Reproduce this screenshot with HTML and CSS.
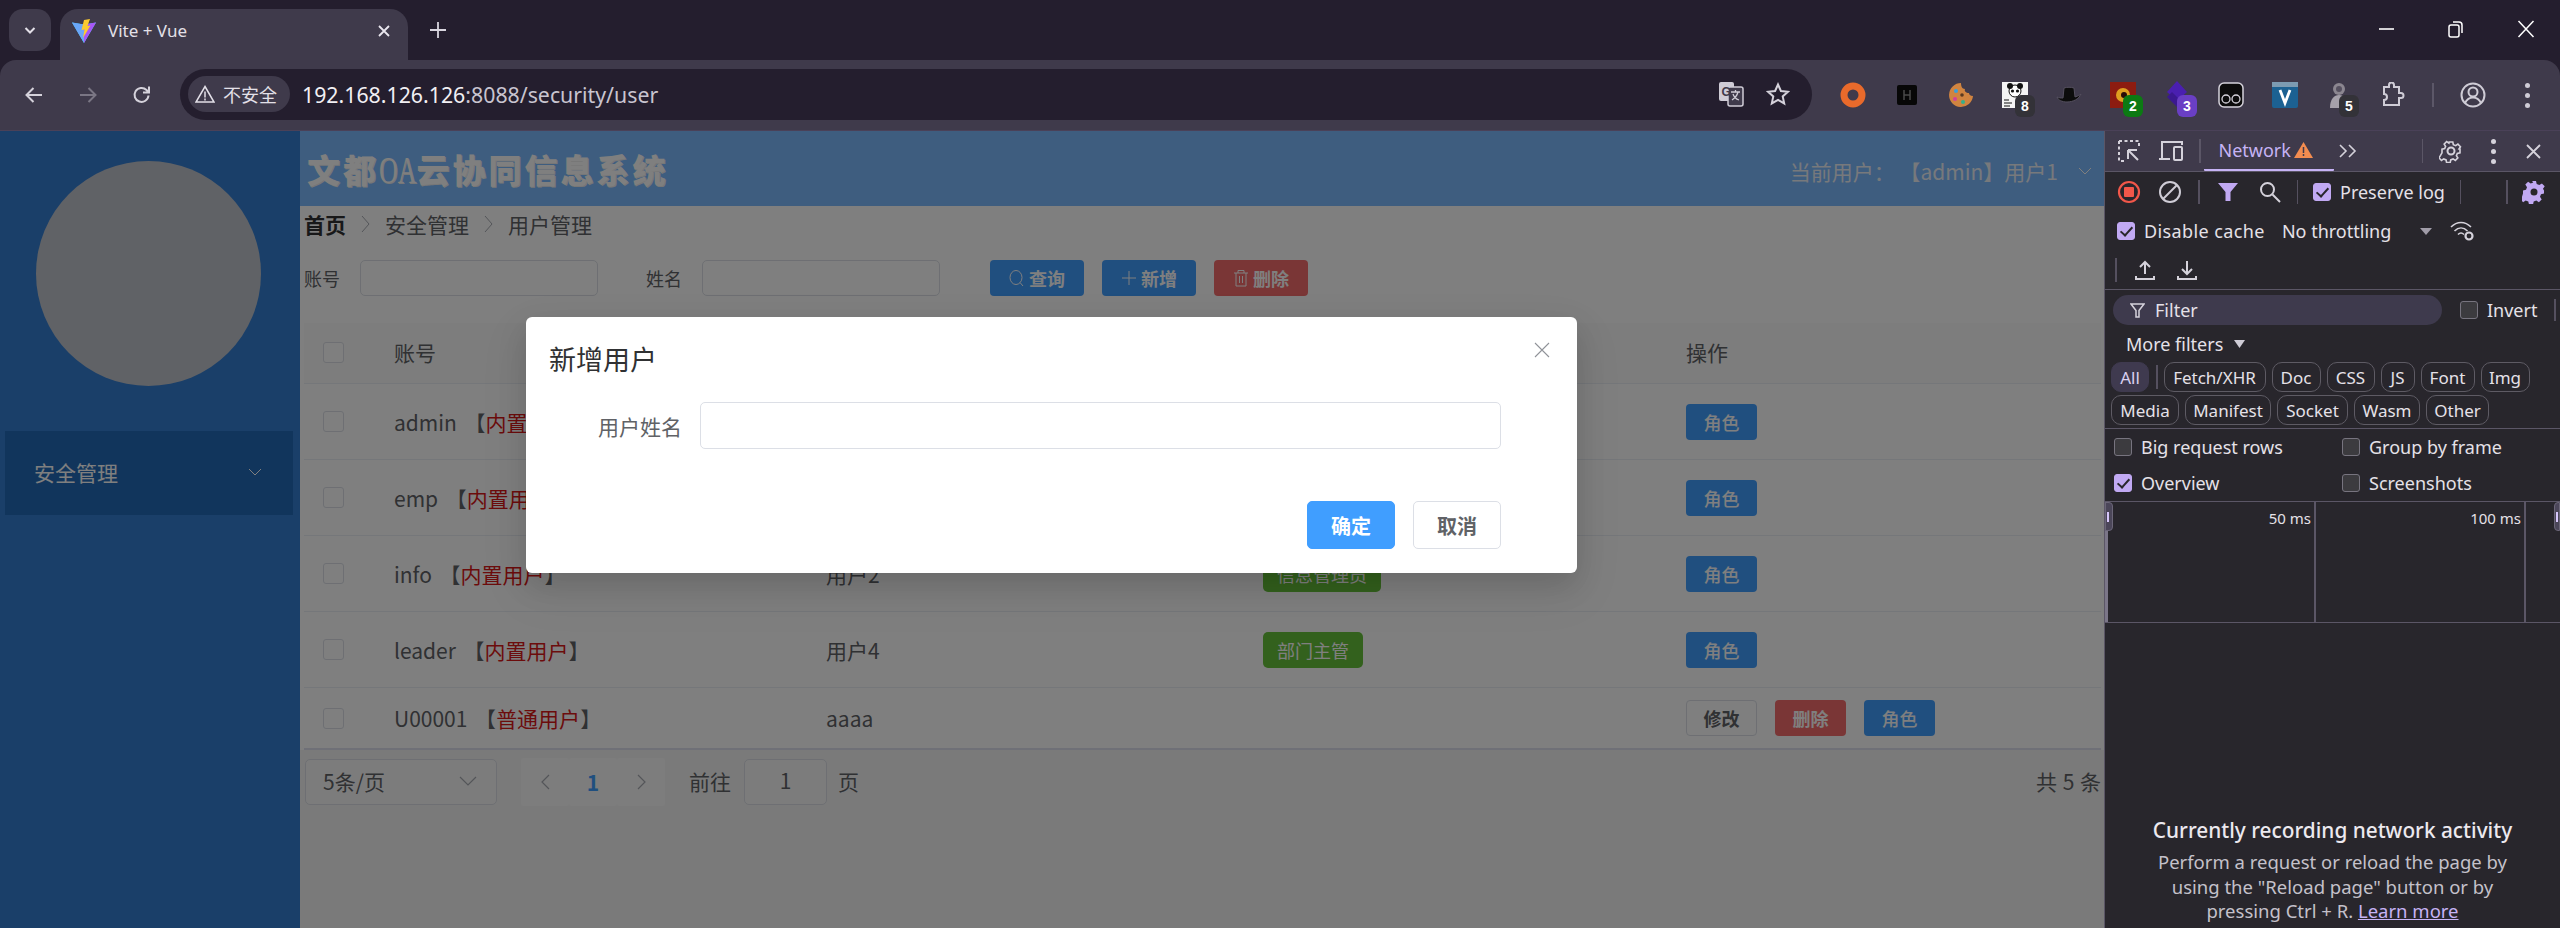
FILE: index.html
```html
<!DOCTYPE html>
<html lang="zh">
<head>
<meta charset="utf-8">
<title>Vite + Vue</title>
<link rel="stylesheet" href="styles.css">
</head>
<body>
<div class="tabstrip">
  <button class="tabsearch"><svg width="14" height="14" viewBox="0 0 14 14"><path d="M2.500 5l4.500 4.500L11.500 5" fill="none" stroke="#e3e0e8" stroke-width="2"/></svg></button>
  <div class="tab">
    <svg class="favicon" width="24" height="24" viewBox="0 0 24 24"><path d="M0 3.500L12 5.500 24 3.500 12 24z" fill="#41d1ff"/><path d="M0 3.500L12 5.500 12 24z" fill="#6aa6f8"/><path d="M24 3.500L12 5.500 12 24z" fill="#a855f7"/><path d="M12 1L18 0 15.500 7 18.500 6.500 11 19 12.500 10.500 9.500 11z" fill="#fdcb2f"/></svg>
    <span class="tabtitle">Vite + Vue</span>
    <svg class="tabclose" width="12" height="12" viewBox="0 0 12 12"><path d="M1 1l10 10M11 1L1 11" stroke="#e9e6ee" stroke-width="1.800"/></svg>
  </div>
  <svg class="newtab" width="16" height="16" viewBox="0 0 16 16"><path d="M8 0v16M0 8h16" stroke="#d9d6df" stroke-width="1.800"/></svg>
  <div class="winctl">
    <svg width="16" height="16" viewBox="0 0 16 16"><path d="M0 8h15" stroke="#fff" stroke-width="1.600"/></svg>
    <svg width="16" height="18" viewBox="0 0 16 18"><rect x="1" y="5" width="10" height="12" rx="2" fill="none" stroke="#fff" stroke-width="1.500"/><path d="M5 2h6a3 3 0 0 1 3 3v8" fill="none" stroke="#fff" stroke-width="1.500"/></svg>
    <svg width="18" height="18" viewBox="0 0 18 18"><path d="M1.500 1l15 16M16.500 1l-15 16" stroke="#fff" stroke-width="1.500"/></svg>
  </div>
</div>

<div class="toolbar">
  <div class="navbtns">
    <svg width="20" height="20" viewBox="0 0 20 20"><path d="M18 10H3M9.500 3L2.500 10l7 7" fill="none" stroke="#d5d2db" stroke-width="2"/></svg>
    <svg width="20" height="20" viewBox="0 0 20 20"><path d="M2 10h15M10.500 3l7 7-7 7" fill="none" stroke="#7a7684" stroke-width="2"/></svg>
    <svg width="20" height="20" viewBox="0 0 20 20"><path d="M16.500 10.500a7 7 0 1 1-2-5.500l2.500 2.500M17 1.500V7.500h-6" fill="none" stroke="#d5d2db" stroke-width="2"/></svg>
  </div>
  <div class="addressbar">
    <div class="chip">
      <svg width="20" height="18" viewBox="0 0 20 18"><path d="M10 1.500L19 17H1z" fill="none" stroke="#e3e0e8" stroke-width="1.500"/><path d="M10 6.500v6M10 13.500v2" stroke="#e3e0e8" stroke-width="1.500"/></svg>
      <span>不安全</span>
    </div>
    <div class="url"><span class="host">192.168.126.126</span><span class="path">:8088/security/user</span></div>
    <svg class="translate" width="26" height="26" viewBox="0 0 26 26"><rect x="1" y="1" width="15" height="19" rx="2" fill="#cfccd6"/><rect x="10" y="6" width="15" height="19" rx="2" fill="#3f3a4b" stroke="#cfccd6" stroke-width="1.500"/><text x="3.500" y="15" class="gt">G</text><path d="M13 11h9M17.500 9v2M20 11c-1 4-3 6-6 8M15 13c1 3 3 5 6 6" fill="none" stroke="#cfccd6" stroke-width="1.300"/></svg>
    <svg class="star" width="24" height="24" viewBox="0 0 24 24"><path d="M12 2.500l2.900 6.500 7.100.7-5.300 4.700 1.500 7L12 17.800l-6.200 3.600 1.500-7L2 9.700l7.100-.7z" fill="none" stroke="#d5d2db" stroke-width="2"/></svg>
  </div>
  <div class="exts">
    <div class="ext"><svg width="26" height="26" viewBox="0 0 26 26"><circle cx="13" cy="13" r="9" fill="none" stroke="#e96a2b" stroke-width="7"/></svg></div>
    <div class="ext"><svg width="20" height="20" viewBox="0 0 20 20"><rect width="20" height="20" rx="2" fill="#070707"/><path d="M7 5v10M13 5v10M7 10h6" stroke="#4a4a4a" stroke-width="1.500"/></svg></div>
    <div class="ext"><svg width="26" height="26" viewBox="0 0 26 26"><path d="M13 1a12 12 0 1 0 12 13c-3 0-4-2-4-3-3 0-5-2-4-4-3 0-4-3-4-6z" fill="#d08440"/><circle cx="8" cy="9" r="2" fill="#3aa0d8"/><circle cx="7" cy="17" r="2" fill="#d0409a"/><circle cx="14" cy="13" r="1.800" fill="#5a3a20"/><circle cx="15" cy="20" r="2" fill="#35b08a"/></svg></div>
    <div class="ext"><svg width="26" height="26" viewBox="0 0 26 26"><rect width="26" height="26" fill="#f4f4f4"/><circle cx="13" cy="9" r="6" fill="#fff" stroke="#111" stroke-width="1"/><circle cx="8" cy="4" r="3" fill="#111"/><circle cx="18" cy="4" r="3" fill="#111"/><circle cx="10.500" cy="9" r="1.600" fill="#111"/><circle cx="15.500" cy="9" r="1.600" fill="#111"/><path d="M2 18h5M2 21h8M2 24h6" stroke="#111"/></svg><span class="badge dark">8</span></div>
    <div class="ext"><svg width="26" height="18" viewBox="0 0 26 18"><path d="M8 2c3-1 7-1 10 0l1 9c3-1 5-2 6-3-2 5-8 8-14 8-5 0-9-2-10-5 2 1 4 1 6 1z" fill="#0c0c0c" stroke="#55505f" stroke-width="1"/></svg></div>
    <div class="ext"><svg width="26" height="26" viewBox="0 0 26 26"><rect width="26" height="26" fill="#8c1c10"/><circle cx="13" cy="13" r="7" fill="#e0a020"/><circle cx="14" cy="13" r="3" fill="#2a0c08"/></svg><span class="badge green">2</span></div>
    <div class="ext"><svg width="26" height="30" viewBox="0 0 26 30"><path d="M13 1l10 11-10 9L3 12z" fill="#4a1fb0"/><path d="M3 17l10 10 5-5-10-10z" fill="#3b1890"/></svg><span class="badge purple">3</span></div>
    <div class="ext"><svg width="26" height="26" viewBox="0 0 26 26"><rect x="1" y="1" width="24" height="24" rx="5" fill="#0c0c0c" stroke="#d5d2db" stroke-width="1.500"/><circle cx="8" cy="17" r="4" fill="none" stroke="#d5d2db" stroke-width="1.300"/><circle cx="18" cy="17" r="4" fill="none" stroke="#d5d2db" stroke-width="1.300"/></svg></div>
    <div class="ext"><svg width="26" height="26" viewBox="0 0 26 26"><rect width="26" height="26" rx="2" fill="#1c6192"/><rect y="0" width="26" height="5" fill="#7c9bb2"/><path d="M8 8l5 13 5-13" fill="none" stroke="#fff" stroke-width="2.800"/></svg></div>
    <div class="ext"><svg width="20" height="26" viewBox="0 0 20 26"><circle cx="10" cy="7" r="6" fill="#8b8690"/><path d="M1 26c0-9 4-13 9-13s9 4 9 13z" fill="#a5a0aa"/><circle cx="10" cy="7" r="3" fill="#55505f"/></svg><span class="badge dark">5</span></div>
    <div class="ext"><svg width="26" height="26" viewBox="0 0 26 26"><path d="M4 5h5V3a2.500 2.500 0 0 1 5 0v2h5v6h2a2.500 2.500 0 0 1 0 5h-2v7H4v-5a3 3 0 0 0 0-6z" fill="none" stroke="#cfccd6" stroke-width="2"/></svg></div>
    <span class="tbdivider"></span>
    <div class="ext"><svg width="26" height="26" viewBox="0 0 26 26"><circle cx="13" cy="13" r="11.500" fill="none" stroke="#cfccd6" stroke-width="2"/><circle cx="13" cy="10" r="4.500" fill="none" stroke="#cfccd6" stroke-width="2"/><path d="M5 21c2-4 5-5.500 8-5.500s6 1.500 8 5.500" fill="none" stroke="#cfccd6" stroke-width="2"/></svg></div>
    <div class="ext kebab"><i></i><i></i><i></i></div>
  </div>
</div>

<div class="main">
  <div class="app">
    <aside class="sidebar">
      <div class="avatar"></div>
      <div class="menuitem"><span>安全管理</span>
        <svg width="14" height="8" viewBox="0 0 14 8"><path d="M1 1l6 6 6-6" fill="none" stroke="#fff" stroke-width="1"/></svg>
      </div>
    </aside>
    <section class="content">
      <header class="apphead">
        <h1 class="brand">文都<span class="oa">OA</span>云协同信息系统</h1>
        <div class="user"><span class="username">当前用户： 【admin】用户1</span><svg width="14" height="8" viewBox="0 0 14 8"><path d="M1 1l6 6 6-6" fill="none" stroke="#fff" stroke-width="1"/></svg></div>
      </header>
      <nav class="crumbs">
        <b>首页</b><svg class="sep" width="9" height="18" viewBox="0 0 9 18"><path d="M1 1l7 8-7 8" fill="none" stroke="#a8abb2" stroke-width="1"/></svg><span>安全管理</span><svg class="sep" width="9" height="18" viewBox="0 0 9 18"><path d="M1 1l7 8-7 8" fill="none" stroke="#a8abb2" stroke-width="1"/></svg><span>用户管理</span>
      </nav>
      <div class="searchform">
        <label class="flabel">账号</label><div class="finput"></div>
        <label class="flabel second">姓名</label><div class="finput"></div>
        <div class="formbtns">
          <button class="btn primary big"><svg width="16" height="18" viewBox="0 0 16 18"><ellipse cx="7" cy="8.500" rx="6" ry="7" fill="none" stroke="#fff" stroke-width="1"/><path d="M11 13.500l3 3.500" stroke="#fff" stroke-width="1"/></svg>查询</button>
          <button class="btn primary big"><svg width="16" height="16" viewBox="0 0 16 16"><path d="M8 1v14M1 8h14" stroke="#fff" stroke-width="1"/></svg>新增</button>
          <button class="btn danger big"><svg width="16" height="18" viewBox="0 0 16 18"><path d="M1 4h14M5 4V1.500h6V4M3 4v13h10V4M6.500 7v7M9.500 7v7" fill="none" stroke="#fff" stroke-width="1"/></svg>删除</button>
        </div>
      </div>
      <div class="usertable">
        <div class="trow thead"><div class="cell"><i class="check"></i></div><div class="cell">账号</div><div class="cell">姓名</div><div class="cell">角色</div><div class="cell">操作</div></div>
        <div class="trow"><div class="cell"><i class="check"></i></div><div class="cell who">admin 【<em>内置用户</em>】</div><div class="cell">用户1</div><div class="cell"><span class="tag">系统管理员</span></div><div class="cell"><button class="btn primary">角色</button></div></div>
        <div class="trow"><div class="cell"><i class="check"></i></div><div class="cell who">emp 【<em>内置用户</em>】</div><div class="cell">用户3</div><div class="cell"><span class="tag">普通员工</span></div><div class="cell"><button class="btn primary">角色</button></div></div>
        <div class="trow"><div class="cell"><i class="check"></i></div><div class="cell who">info 【<em>内置用户</em>】</div><div class="cell">用户2</div><div class="cell"><span class="tag">信息管理员</span></div><div class="cell"><button class="btn primary">角色</button></div></div>
        <div class="trow"><div class="cell"><i class="check"></i></div><div class="cell who">leader 【<em>内置用户</em>】</div><div class="cell">用户4</div><div class="cell"><span class="tag">部门主管</span></div><div class="cell"><button class="btn primary">角色</button></div></div>
        <div class="trow last"><div class="cell"><i class="check"></i></div><div class="cell who">U00001 【<em>普通用户</em>】</div><div class="cell">aaaa</div><div class="cell"></div><div class="cell"><button class="btn plain">修改</button><button class="btn danger">删除</button><button class="btn primary">角色</button></div></div>
      </div>
      <div class="pager">
        <div class="pagesize"><span>5条/页</span><svg width="18" height="10" viewBox="0 0 18 10"><path d="M1 1l8 8 8-8" fill="none" stroke="#a8abb2" stroke-width="1.200"/></svg></div>
        <div class="pagebtns">
          <div class="pb"><svg width="9" height="16" viewBox="0 0 9 16"><path d="M8 1L1 8l7 7" fill="none" stroke="#a8abb2" stroke-width="1.200"/></svg></div>
          <div class="pb cur">1</div>
          <div class="pb"><svg width="9" height="16" viewBox="0 0 9 16"><path d="M1 1l7 7-7 7" fill="none" stroke="#a8abb2" stroke-width="1.200"/></svg></div>
        </div>
        <span class="goto">前往</span><div class="pageinput">1</div><span class="goto">页</span>
        <span class="total">共 5 条</span>
      </div>
    </section>
    <div class="overlay"></div>
    <div class="modal">
      <div class="modalhead"><span>新增用户</span><svg width="16" height="16" viewBox="0 0 16 16"><path d="M1 1l14 14M15 1L1 15" stroke="#909399" stroke-width="1.100"/></svg></div>
      <div class="modalbody"><label>用户姓名</label><div class="minput"></div></div>
      <div class="modalfoot"><button class="mbtn ok">确定</button><button class="mbtn">取消</button></div>
    </div>
  </div>

  <aside class="devtools">
    <div class="dttabs">
      <svg class="ml13" width="24" height="24" viewBox="0 0 24 24"><path d="M2 2h20v7M2 2v20h7" fill="none" stroke="#d5d2db" stroke-width="2" stroke-dasharray="3 2.500"/><path d="M11 11h9M11 11v9M11 11l10 10" fill="none" stroke="#d5d2db" stroke-width="2"/></svg>
      <svg class="ml17" width="26" height="22" viewBox="0 0 26 22"><path d="M1 19h11M4 18V2h20v3" fill="none" stroke="#d5d2db" stroke-width="2"/><rect x="16" y="7" width="8" height="13" rx="1" fill="none" stroke="#d5d2db" stroke-width="2"/></svg>
      <i class="dv dv1"></i>
      <div class="nettab"><span>Network</span><svg width="19" height="16" viewBox="0 0 19 16"><path d="M9.500 0L19 16H0z" fill="#f38c50"/><path d="M9.500 5v6M9.500 12v2" stroke="#3f3a4b" stroke-width="1.500"/></svg></div>
      <svg class="more" width="18" height="14" viewBox="0 0 18 14"><path d="M1 1l6 6-6 6M10 1l6 6-6 6" fill="none" stroke="#d5d2db" stroke-width="1.600"/></svg>
      <i class="dv dv2"></i>
      <svg class="gear" width="24" height="24" viewBox="0 0 24 24"><circle cx="12" cy="12" r="3.500" fill="none" stroke="#d5d2db" stroke-width="2"/><path d="M10 2h4l.6 3 2.600 1.100 2.500-1.700 2.800 2.900-1.600 2.500L22 10v4l-3 .6-1 2.500 1.600 2.500-2.800 2.900-2.500-1.700-2.600 1.100-.6 3h-4l-.6-3-2.600-1.100-2.500 1.700-2.800-2.900 1.600-2.500L2 14v-4l3-.6 1-2.500-1.600-2.500 2.800-2.900 2.500 1.700z" fill="none" stroke="#d5d2db" stroke-width="1.800" transform="translate(1.200 1.200) scale(.9)"/></svg>
      <div class="kebab dtk"><i></i><i></i><i></i></div>
      <svg class="dtclose" width="15" height="15" viewBox="0 0 15 15"><path d="M1 1l13 13M14 1L1 14" stroke="#d5d2db" stroke-width="1.800"/></svg>
    </div>
    <div class="dtrow r1">
      <svg class="ml13" width="24" height="24" viewBox="0 0 24 24"><circle cx="12" cy="12" r="10" fill="none" stroke="#f2574a" stroke-width="2.200"/><rect x="7" y="7" width="10" height="10" rx="1" fill="#f2574a"/></svg>
      <svg class="ml17" width="24" height="24" viewBox="0 0 24 24"><circle cx="12" cy="12" r="10" fill="none" stroke="#cfccd6" stroke-width="2"/><path d="M5 19L19 5" stroke="#cfccd6" stroke-width="2"/></svg>
      <i class="dvs a"></i>
      <svg class="funnel" width="20" height="20" viewBox="0 0 20 20"><path d="M0 1h20l-7.500 9v9h-5v-9z" fill="#c1a9f3"/></svg>
      <svg class="lens" width="22" height="22" viewBox="0 0 22 22"><circle cx="8.500" cy="8.500" r="6.500" fill="none" stroke="#d5d2db" stroke-width="2"/><path d="M13.500 13.500l7.500 7.500" stroke="#d5d2db" stroke-width="2"/></svg>
      <i class="dvs b"></i>
      <label class="cb on c1"></label><span class="lbl">Preserve log</span>
      <i class="dvs c"></i><i class="dvs d"></i>
      <svg class="pgear" width="24" height="24" viewBox="0 0 24 24"><path d="M10 1h4l.7 3 2.600 1.100 2.600-1.700 2.800 2.800-1.700 2.600L22 10.500v3l-3 .7-1 2.600 1.700 2.600-2.800 2.800-2.600-1.700-2.600 1.100-.7 3h-4l-.7-3-2.600-1.100-2.600 1.700-2.800-2.800 1.700-2.600L1 13.500v-3l3-.7 1-2.600-1.700-2.600 2.800-2.800 2.600 1.700 2.600-1.100z" fill="#c1a9f3"/><circle cx="12" cy="12" r="3.500" fill="#28262c"/></svg>
    </div>
    <div class="dtrow r2">
      <label class="cb on c2"></label><span class="lbl wide">Disable cache</span><span class="lbl thr">No throttling</span>
      <svg class="caret" width="12" height="7" viewBox="0 0 12 7"><path d="M0 0h12L6 7z" fill="#a09ca8"/></svg>
      <svg class="wifi" width="25" height="22" viewBox="0 0 25 22"><path d="M1 7c6-6 14-6 20 0M4.500 11c4-4 9-4 13 0M8 14.500c2-2 4-2 6 0" fill="none" stroke="#d5d2db" stroke-width="1.600"/><circle cx="19" cy="16" r="3.500" fill="none" stroke="#d5d2db" stroke-width="2.200"/></svg>
    </div>
    <div class="dtrow r3">
      <i class="dvs e"></i>
      <svg width="20" height="20" viewBox="0 0 20 20"><path d="M10 14V2M5 7l5-5 5 5M1 16v3h18v-3" fill="none" stroke="#d5d2db" stroke-width="2"/></svg>
      <svg class="ml23" width="20" height="20" viewBox="0 0 20 20"><path d="M10 1v13M5 9l5 5 5-5M1 16v3h18v-3" fill="none" stroke="#d5d2db" stroke-width="2"/></svg>
    </div>
    <div class="filterrow">
      <div class="pill"><svg width="15" height="15" viewBox="0 0 15 15"><path d="M1 1h13L9 7.500V14H6V7.500z" fill="none" stroke="#d5d2db" stroke-width="1.500"/></svg><span>Filter</span></div>
      <label class="cb"></label><span class="lbl">Invert</span><i class="dvs f"></i>
    </div>
    <div class="morefilters"><span class="lbl">More filters</span><svg width="11" height="8" viewBox="0 0 11 8"><path d="M0 0h11L5.500 8z" fill="#cfccd6"/></svg></div>
    <div class="chips">
      <span class="fchip sel w38">All</span><i class="dvs g"></i><span class="fchip w102">Fetch/XHR</span><span class="fchip w49">Doc</span><span class="fchip w48">CSS</span><span class="fchip w34">JS</span><span class="fchip w54">Font</span><span class="fchip w49">Img</span>
    </div>
    <div class="chips second">
      <span class="fchip w68">Media</span><span class="fchip w86">Manifest</span><span class="fchip w71">Socket</span><span class="fchip w66">Wasm</span><span class="fchip w63">Other</span>
    </div>
    <div class="options">
      <div class="opt"><label class="cb"></label><span class="lbl">Big request rows</span></div>
      <div class="opt"><label class="cb"></label><span class="lbl">Group by frame</span></div>
      <div class="opt"><label class="cb on"></label><span class="lbl">Overview</span></div>
      <div class="opt"><label class="cb"></label><span class="lbl">Screenshots</span></div>
    </div>
    <div class="overview">
      <div class="ovcell"><span>50 ms</span></div>
      <div class="ovcell"><span>100 ms</span></div>
      <i class="hd left"></i><i class="hd right"></i>
    </div>
    <div class="recording">
      <h2>Currently recording network activity</h2>
      <p>Perform a request or reload the page by using the "Reload page" button or by pressing Ctrl + R. <a>Learn more</a></p>
    </div>
  </aside>
</div>
</body>
</html>
```

FILE: styles.css
```css
* { box-sizing: border-box; }
html, body { margin: 0; height: 928px; overflow: hidden; }
body { width: 2560px; background: #241e2e; font-family: "Noto Sans", "Noto Sans CJK SC", sans-serif; color: #e5e1e8; }
button { font: inherit; border: 0; padding: 0; }
i, em { font-style: normal; }

.tabstrip { height: 60px; display: flex; align-items: flex-start; padding-left: 9px; position: relative; }
.tabsearch { width: 42px; height: 42px; margin-top: 9px; border-radius: 14px; background: #3f3a4b; display: flex; align-items: center; justify-content: center; }
.tab { width: 348px; height: 51px; margin: 9px 0 0 9px; background: #3f3a4b; border-radius: 18px 18px 0 0; display: flex; align-items: center; padding: 0 18px 8px 12px; }
.favicon { flex: none; }
.tabtitle { font-size: 17px; margin-left: 12px; flex: 1; color: #e3e0e8; }
.newtab { margin: 22px 0 0 22px; }
.winctl { margin-left: auto; display: flex; align-items: center; gap: 53px; height: 58px; padding-right: 25px; }

.toolbar { height: 70px; background: #3f3a4b; border-radius: 16px 16px 0 0; display: flex; align-items: center; padding-left: 24px; }
.navbtns { display: flex; gap: 34px; width: 156px; }
.addressbar { width: 1632px; height: 51px; background: #241e2e; border-radius: 26px; display: flex; align-items: center; padding: 0 22px 0 8px; margin-bottom: 2px; }
.chip { width: 102px; height: 36px; background: #3f3a4b; border-radius: 18px; display: flex; align-items: center; gap: 8px; padding-left: 7px; font-size: 18px; color: #e3e0e8; white-space: nowrap; }
.chip span { font-family: "Noto Sans CJK SC", sans-serif; }
.url { margin-left: 12px; font-size: 21.300px; flex: 1; white-space: nowrap; }
.host { color: #f2f0f4; }
.path { color: #c9c5d0; }
.gt { font: bold 12px "Liberation Sans", sans-serif; fill: #3f3a4b; }
.star { margin-left: 22px; }
.exts { display: flex; align-items: center; margin-left: 14px; }
.ext { width: 54px; height: 40px; display: flex; align-items: center; justify-content: center; position: relative; }
.badge { position: absolute; left: 27px; top: 20px; width: 20px; height: 22px; border-radius: 6px; font-size: 14px; font-weight: 700; line-height: 22px; text-align: center; color: #fff; font-family: "Liberation Sans", sans-serif; }
.badge.dark { background: #333238; }
.badge.green { background: #0c7a13; }
.badge.purple { background: #6a3fc4; }
.tbdivider { width: 2px; height: 24px; background: #5c5768; margin: 0 12px 0 12px; }
.kebab { display: flex; flex-direction: column; align-items: center; justify-content: center; gap: 5px; }
.kebab i { width: 5px; height: 5px; border-radius: 50%; background: #cfccd6; }

.main { height: 798px; display: flex; border-top: 1px solid #4a4158; background: #3f3a4b; }
.app { width: 2104px; height: 797px; display: flex; position: relative; overflow: hidden; flex: none; }
.sidebar { width: 300px; flex: none; background: #347ed2; padding-top: 30px; }
.avatar { width: 225px; height: 225px; border-radius: 50%; background: #c0c4cc; margin-left: 36px; }
.menuitem { margin: 45px 7px 0 5px; height: 84px; background: #226ab8; display: flex; align-items: center; justify-content: space-between; padding: 0 31px 2px 29px; font-size: 21px; color: #fff; font-family: "Noto Sans CJK SC", sans-serif; }
.content { flex: 1; background: #fff; display: flex; flex-direction: column; color: #606266; font-family: "Noto Sans CJK SC", sans-serif; font-size: 21px; }
.apphead { height: 75px; background: #7cbaff; display: flex; align-items: center; justify-content: space-between; padding: 0 12px 0 7px; flex: none; }
.brand { margin: 2px 0 0; font-size: 33px; line-height: 1; letter-spacing: 3px; font-weight: 900; color: #fff; text-shadow: 1px 1px 0 #eee; white-space: nowrap; }
.oa { font-family: "Liberation Serif", serif; font-size: 37px; line-height: 33px; font-weight: 400; letter-spacing: 0; display: inline-block; transform: scaleX(.7); transform-origin: left; margin-right: -16px; }
.user { display: flex; align-items: center; gap: 20px; color: #eef2f8; margin-top: 4px; }
.username { white-space: pre; }
.crumbs { height: 36px; flex: none; display: flex; align-items: center; padding-left: 4px; color: #606266; white-space: nowrap; }
.crumbs b { color: #303133; font-weight: 700; }
.sep { margin: 0 15px; }
.searchform { flex: none; height: 36px; margin-top: 18px; display: flex; align-items: center; padding-left: 4px; font-size: 18px; }
.flabel { width: 56px; flex: none; }
.flabel.second { margin-left: 48px; }
.finput { width: 238px; height: 36px; border: 1.500px solid #dcdfe6; border-radius: 5px; background: #fff; }
.formbtns { display: flex; gap: 18px; margin-left: 50px; }
.btn { height: 36px; width: 71px; border-radius: 4px; font-size: 18px; color: #fff; font-weight: 700; font-family: "Noto Sans CJK SC", sans-serif; display: inline-flex; align-items: center; justify-content: center; gap: 4px; }
.btn.big { width: 94px; }
.primary { background: #409eff; }
.btn.primary:not(.big) { font-weight: 500; }
.danger { background: #f56c6c; }
.plain { background: #fff; border: 1px solid #dcdfe6; color: #606266; }

.usertable { margin: 27px 3px 0 4px; flex: none; background: #fff; }
.trow { height: 76px; display: grid; grid-template-columns: 90px 432px 437px 423px 1fr; align-items: center; border-bottom: 1px solid #ebeef5; }
.trow.thead { height: 61px; background: #fafafa; padding-bottom: 2px; }
.trow.last { height: 62px; border-bottom: 2px solid #dfe1ee; }
.cell { display: flex; align-items: center; gap: 18px; white-space: nowrap; }
.cell.who { display: block; word-spacing: 3px; }
.cell em { color: #d81818; }
.check { width: 21px; height: 21px; margin-left: 19px; border: 1px solid #dcdfe6; border-radius: 3px; background: #fff; }
.tag { height: 36px; padding: 0 14px; background: #67c23a; border-radius: 5px; color: #fff; font-size: 18px; line-height: 36px; }

.pager { flex: 1; background: #f5f5f5; display: flex; align-items: flex-start; padding: 9px 3px 0 5px; white-space: nowrap; line-height: 44px; }
.pagesize { width: 192px; height: 46px; border: 1.500px solid #dcdfe6; border-radius: 5px; background: #f9f9f9; display: flex; align-items: center; justify-content: space-between; padding: 0 19px 2px 17px; flex: none; }
.pagebtns { display: flex; margin-left: 24px; }
.pb { width: 48px; height: 48px; margin-top: -1px; background: #fafafa; display: flex; align-items: center; justify-content: center; border-radius: 2px; }
.pb.cur { color: #409eff; font-weight: 700; }
.pagebtns + .goto { margin-left: 24px; }
.pageinput { width: 83px; height: 46px; margin: 0 11px 0 13px; border: 1.500px solid #dcdfe6; border-radius: 5px; text-align: center; line-height: 40px; background: #f9f9f9; }
.total { margin-left: auto; color: #606266; word-spacing: 1px; }

.overlay { position: absolute; inset: 0; background: rgba(0, 0, 0, .5); }
.modal { position: absolute; left: 526px; top: 186px; width: 1051px; height: 256px; background: #fff; border-radius: 6px; box-shadow: 0 18px 48px 6px rgba(0,0,0,.06), 0 12px 30px rgba(0,0,0,.12); font-family: "Noto Sans CJK SC", sans-serif; color: #606266; display: flex; flex-direction: column; }
.modalhead { display: flex; justify-content: space-between; padding: 22px 27px 0 23px; height: 85px; flex: none; font-size: 27px; line-height: 40px; color: #303133; }
.modalhead svg { margin-top: 3px; }
.modalbody { display: flex; height: 47px; flex: none; align-items: center; font-size: 21px; padding-left: 72px; }
.modalbody label { width: 102px; flex: none; }
.minput { width: 801px; height: 47px; border: 1.500px solid #dcdfe6; border-radius: 5px; }
.modalfoot { margin-top: 52px; display: flex; justify-content: flex-end; gap: 18px; padding-right: 76px; }
.mbtn { width: 88px; height: 48px; border-radius: 5px; background: #fff; border: 1.500px solid #dcdfe6; color: #606266; font-size: 20px; font-weight: 700; font-family: "Noto Sans CJK SC", sans-serif; }
.mbtn.ok { background: #409eff; border-color: #409eff; color: #fff; }

.devtools { width: 456px; flex: none; height: 797px; background: #28262c; border-left: 1px solid #5b5666; position: relative; font-size: 18px; line-height: 1; }
.lbl { white-space: nowrap; color: #e5e1e8; }
.lbl.wide { letter-spacing: .4px; }
.dttabs { height: 41px; background: #3f3a4b; border-bottom: 1px solid #5b5666; display: flex; align-items: center; position: relative; }
.ml13 { margin-left: 12px; }
.ml17 { margin-left: 17px; }
.ml23 { margin-left: 22px; }
.dv { width: 1.500px; height: 24px; background: #5b5666; flex: none; }
.dv1 { margin-left: 15px; }
.nettab { width: 130px; height: 40px; margin-left: 3px; border-bottom: 2px solid #c6b3f5; display: flex; align-items: center; gap: 3px; padding-left: 15px; color: #c6b3f5; font-size: 18px; flex: none; border-radius: 0 0 1px 1px; }
.more { margin-left: 5px; }
.dv2 { margin-left: 65px; }
.gear { margin-left: 16px; }
.dtk { margin-left: 26px; width: 8px; }
.dtk i { background: #d5d2db; }
.dtclose { margin-left: 29px; }

.dtrow { display: flex; align-items: center; position: relative; }
.r1 { height: 40px; }
.r2 { height: 38px; padding-left: 12px; }
.r3 { height: 40px; padding-left: 10px; border-bottom: 1px solid #5b5666; gap: 0; }
.dvs { width: 1.500px; height: 24px; background: #55505f; flex: none; }
.dvs.a { margin-left: 16px; }
.funnel { margin-left: 18px; }
.lens { margin-left: 21px; }
.dvs.b { margin-left: 16px; }
.cb { width: 18px; height: 18px; border-radius: 3px; flex: none; background: #3c3b3f; border: 1.500px solid #77747f; display: block; position: relative; }
.cb.on { background: #c1a9f3; border-color: #c1a9f3; }
.cb.on::after { content: ""; position: absolute; left: 5px; top: 1px; width: 5px; height: 10px; border: solid #28262c; border-width: 0 2.500px 2.500px 0; transform: rotate(42deg); }
.c1 { margin-left: 15px; }
.cb + .lbl { margin-left: 9px; }
.dvs.c { margin-left: 15px; }
.dvs.d { margin-left: 45px; }
.pgear { margin-left: 14px; }
.thr { margin-left: 17px; }
.caret { margin-left: 29px; }
.wifi { margin-left: 18px; }
.dvs.e { margin-right: 18px; }
.filterrow { height: 40px; display: flex; align-items: center; padding-left: 8px; }
.pill { width: 329px; height: 30px; border-radius: 15px; background: #3e3a4d; display: flex; align-items: center; padding-left: 17px; gap: 10px; font-size: 18px; }
.filterrow .cb { margin-left: 18px; }
.dvs.f { margin-left: 17px; height: 22px; }
.morefilters { height: 28px; display: flex; align-items: center; gap: 11px; padding-left: 21px; font-size: 18px; }
.chips { display: flex; align-items: center; gap: 6px; padding-left: 6px; height: 30px; margin-top: 4px; font-size: 17px; }
.chips.second { margin-top: 3px; }
.fchip { height: 30px; border: 1.500px solid #5e5b64; border-radius: 10px; display: flex; align-items: center; justify-content: center; white-space: nowrap; color: #e5e1e8; flex: none; }
.fchip.sel { background: #3f3a4f; border-color: #3f3a4f; color: #d9d0f0; }
.w34 { width: 34px; } .w38 { width: 38px; } .w48 { width: 48px; } .w49 { width: 49px; } .w54 { width: 54px; } .w63 { width: 63px; } .w66 { width: 66px; } .w68 { width: 68px; } .w71 { width: 71px; } .w86 { width: 86px; } .w102 { width: 102px; }
.dvs.g { margin-left: 1px; }
.options { margin-top: 3px; border-top: 1px solid #5b5666; display: grid; grid-template-columns: 228px 1fr; grid-auto-rows: 36px; padding: 0 0 0 9px; height: 73px; align-items: center; font-size: 18px; }
.opt { display: flex; align-items: center; }
.overview { height: 122px; border-top: 1px solid #5b5666; border-bottom: 1.500px solid #5b5666; display: flex; position: relative; padding-left: 1px; }
.overview::before { content: ""; position: absolute; left: 0; top: 0; bottom: 0; width: 3px; background: #7b7688; }
.ovcell { width: 210px; border-right: 2px solid #5b5666; text-align: right; padding: 9px 3px 0 0; font-size: 15px; color: #e5e1e8; }
.hd { position: absolute; top: 0; width: 8px; height: 29px; background: #4b4659; border: 1px solid #6b6678; }
.hd::after { content: ""; position: absolute; left: 1px; top: 9px; width: 2px; height: 10px; background: #d6c6fa; }
.hd.left { left: 0; border-radius: 0 4px 4px 0; }
.hd.right { right: 0; width: 6px; border-radius: 4px 0 0 4px; }
.recording { text-align: center; padding: 195px 38px 0; }
.recording h2 { margin: 0; font-size: 20.800px; font-weight: 500; line-height: 24px; color: #ece9ef; white-space: nowrap; }
.recording p { margin: 8px 0 0; font-size: 18.500px; line-height: 24.500px; color: #c4c1ca; }
.recording a { color: #c6b3f5; text-decoration: underline; white-space: nowrap; }
```
